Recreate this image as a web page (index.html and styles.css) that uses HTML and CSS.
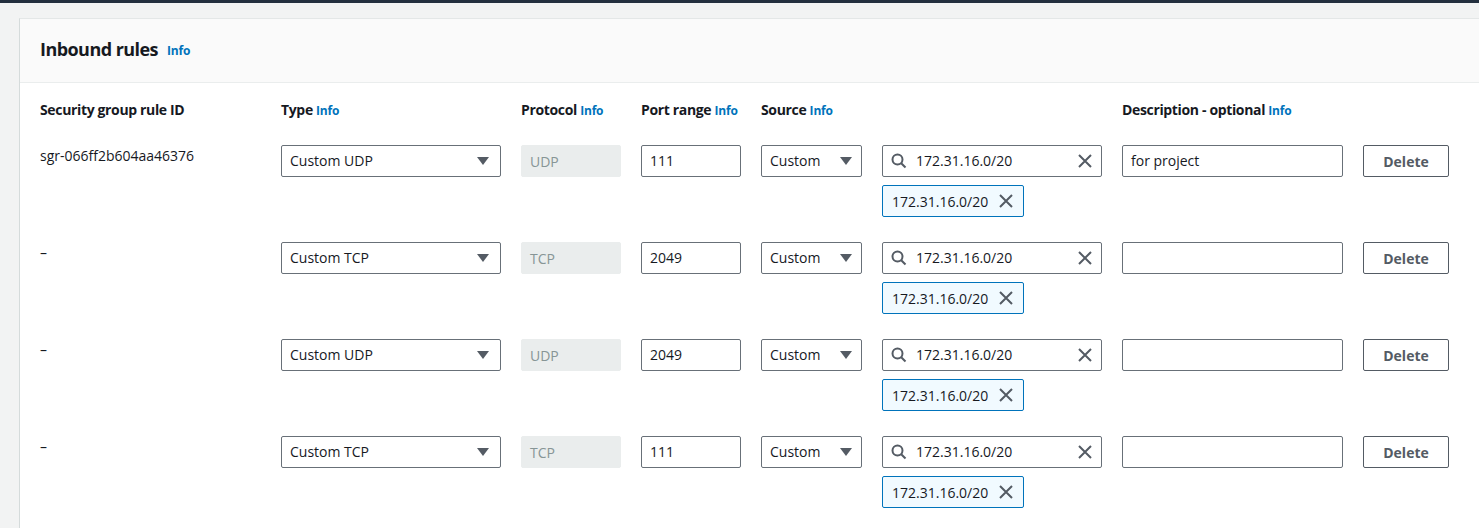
FILE: index.html
```html
<!DOCTYPE html>
<html lang="en">
<head>
<meta charset="utf-8">
<title>Inbound rules</title>
<link rel="stylesheet" href="styles.css">
</head>
<body>
<div class="topbar"></div>
<div class="page">
  <section class="card">
    <header class="card-header">
      <h2 class="title">Inbound rules</h2><a class="info" href="#">Info</a>
    </header>
    <div class="card-body">
      <div class="grid head">
        <div class="label">Security group rule ID</div>
        <div class="label">Type <a class="info" href="#">Info</a></div>
        <div class="label">Protocol <a class="info" href="#">Info</a></div>
        <div class="label">Port range <a class="info" href="#">Info</a></div>
        <div class="label">Source <a class="info" href="#">Info</a></div>
        <div class="label"></div>
        <div class="label">Description - optional <a class="info" href="#">Info</a></div>
        <div class="label"></div>
      </div>

      <div class="grid rule">
        <div class="rule-id">sgr-066ff2b604aa46376</div>
        <div class="select wide"><span>Custom UDP</span><svg class="caret" viewBox="0 0 12 8"><path d="M0 0h12L6 8z"/></svg></div>
        <div class="readonly">UDP</div>
        <div class="input">111</div>
        <div class="select"><span>Custom</span><svg class="caret" viewBox="0 0 12 8"><path d="M0 0h12L6 8z"/></svg></div>
        <div class="cidr">
          <div class="search">
            <svg class="mag" viewBox="0 0 16 16"><circle cx="6.5" cy="6.5" r="5" /><path d="M10.2 10.2L14.5 14.5"/></svg>
            <span class="search-text">172.31.16.0/20</span>
            <svg class="x" viewBox="0 0 16 16"><path d="M2 2L14 14M14 2L2 14"/></svg>
          </div>
          <div class="token"><span>172.31.16.0/20</span><svg class="x" viewBox="0 0 16 16"><path d="M2 2L14 14M14 2L2 14"/></svg></div>
        </div>
        <div class="input">for project</div>
        <div><button class="btn">Delete</button></div>
      </div>

      <div class="grid rule">
        <div class="rule-id">–</div>
        <div class="select wide"><span>Custom TCP</span><svg class="caret" viewBox="0 0 12 8"><path d="M0 0h12L6 8z"/></svg></div>
        <div class="readonly">TCP</div>
        <div class="input">2049</div>
        <div class="select"><span>Custom</span><svg class="caret" viewBox="0 0 12 8"><path d="M0 0h12L6 8z"/></svg></div>
        <div class="cidr">
          <div class="search">
            <svg class="mag" viewBox="0 0 16 16"><circle cx="6.5" cy="6.5" r="5" /><path d="M10.2 10.2L14.5 14.5"/></svg>
            <span class="search-text">172.31.16.0/20</span>
            <svg class="x" viewBox="0 0 16 16"><path d="M2 2L14 14M14 2L2 14"/></svg>
          </div>
          <div class="token"><span>172.31.16.0/20</span><svg class="x" viewBox="0 0 16 16"><path d="M2 2L14 14M14 2L2 14"/></svg></div>
        </div>
        <div class="input"></div>
        <div><button class="btn">Delete</button></div>
      </div>

      <div class="grid rule">
        <div class="rule-id">–</div>
        <div class="select wide"><span>Custom UDP</span><svg class="caret" viewBox="0 0 12 8"><path d="M0 0h12L6 8z"/></svg></div>
        <div class="readonly">UDP</div>
        <div class="input">2049</div>
        <div class="select"><span>Custom</span><svg class="caret" viewBox="0 0 12 8"><path d="M0 0h12L6 8z"/></svg></div>
        <div class="cidr">
          <div class="search">
            <svg class="mag" viewBox="0 0 16 16"><circle cx="6.5" cy="6.5" r="5" /><path d="M10.2 10.2L14.5 14.5"/></svg>
            <span class="search-text">172.31.16.0/20</span>
            <svg class="x" viewBox="0 0 16 16"><path d="M2 2L14 14M14 2L2 14"/></svg>
          </div>
          <div class="token"><span>172.31.16.0/20</span><svg class="x" viewBox="0 0 16 16"><path d="M2 2L14 14M14 2L2 14"/></svg></div>
        </div>
        <div class="input"></div>
        <div><button class="btn">Delete</button></div>
      </div>

      <div class="grid rule">
        <div class="rule-id">–</div>
        <div class="select wide"><span>Custom TCP</span><svg class="caret" viewBox="0 0 12 8"><path d="M0 0h12L6 8z"/></svg></div>
        <div class="readonly">TCP</div>
        <div class="input">111</div>
        <div class="select"><span>Custom</span><svg class="caret" viewBox="0 0 12 8"><path d="M0 0h12L6 8z"/></svg></div>
        <div class="cidr">
          <div class="search">
            <svg class="mag" viewBox="0 0 16 16"><circle cx="6.5" cy="6.5" r="5" /><path d="M10.2 10.2L14.5 14.5"/></svg>
            <span class="search-text">172.31.16.0/20</span>
            <svg class="x" viewBox="0 0 16 16"><path d="M2 2L14 14M14 2L2 14"/></svg>
          </div>
          <div class="token"><span>172.31.16.0/20</span><svg class="x" viewBox="0 0 16 16"><path d="M2 2L14 14M14 2L2 14"/></svg></div>
        </div>
        <div class="input"></div>
        <div><button class="btn">Delete</button></div>
      </div>
    </div>
  </section>
</div>
</body>
</html>
```

FILE: styles.css
```css
* { box-sizing: border-box; }

html, body {
  margin: 0;
  padding: 0;
  height: 100%;
  overflow: hidden;
}

body {
  background: #f2f3f3;
  font-family: "Open Sans", "Noto Sans", Arial, sans-serif;
  font-size: 14px;
  color: #16191f;
}

.topbar {
  height: 3px;
  background: #232f3e;
}

.page {
  padding: 15px 0 0 19px;
}

.card {
  background: #ffffff;
  border-left: 1px solid #d5dbdb;
  border-top: 1px solid #e4e7e7;
  min-height: 520px;
}

.card-header {
  height: 64px;
  background: #fafafa;
  border-bottom: 1px solid #eaeded;
  padding: 0 20px 4px;
  display: flex;
  align-items: center;
}

.title {
  margin: 0;
  font-size: 18px;
  font-weight: 700;
  line-height: 22px;
  letter-spacing: -0.55px;
  color: #16191f;
}

.info {
  color: #0073bb;
  font-size: 12px;
  font-weight: 700;
  letter-spacing: -0.2px;
  text-decoration: none;
}

.card-header .info {
  margin-left: 9px;
  margin-top: 4px;
}

.card-body {
  padding: 17px 0 0 20px;
}

.grid {
  display: grid;
  grid-template-columns: 221px 220px 100px 100px 101px 220px 221px 86px;
  column-gap: 20px;
}

.head {
  margin-bottom: 24px;
}

.label {
  font-weight: 700;
  line-height: 20px;
  letter-spacing: -0.35px;
  white-space: nowrap;
}

.rule {
  margin-bottom: 25px;
  align-items: start;
}

.rule-id {
  line-height: 20px;
  padding-top: 1px;
}

.select,
.input,
.search {
  height: 32px;
  border: 1px solid #687078;
  border-radius: 2px;
  background: #fff;
  display: flex;
  align-items: center;
  padding: 0 9px 0 8px;
  line-height: 20px;
}

.select {
  justify-content: space-between;
}

.select.wide {
  padding-right: 11px;
}

.caret {
  width: 12px;
  height: 8px;
  fill: #545b64;
  flex: none;
}

.readonly {
  height: 32px;
  background: #eaeded;
  border: 1px solid #eaeded;
  border-radius: 2px;
  color: #879596;
  display: flex;
  align-items: center;
  padding: 0 9px 0 8px;
}

.cidr {
  display: flex;
  flex-direction: column;
  align-items: flex-start;
  gap: 8px;
}

.search {
  width: 100%;
  padding: 0 8px 0 8px;
}

.mag {
  width: 16px;
  height: 16px;
  fill: none;
  stroke: #545b64;
  stroke-width: 2;
  flex: none;
}

.search-text {
  flex: 1;
  margin-left: 9px;
}

.x {
  width: 16px;
  height: 16px;
  fill: none;
  stroke: #545b64;
  stroke-width: 2;
  flex: none;
}

.token {
  height: 32px;
  border: 1px solid #0073bb;
  border-radius: 2px;
  background: #f1faff;
  display: flex;
  align-items: center;
  gap: 10px;
  padding: 0 9px 0 9px;
}

.btn {
  width: 86px;
  height: 32px;
  border: 1px solid #545b64;
  border-radius: 2px;
  background: #fff;
  color: #545b64;
  font-family: inherit;
  font-size: 14px;
  font-weight: 700;
  padding: 0;
  cursor: pointer;
}
```
